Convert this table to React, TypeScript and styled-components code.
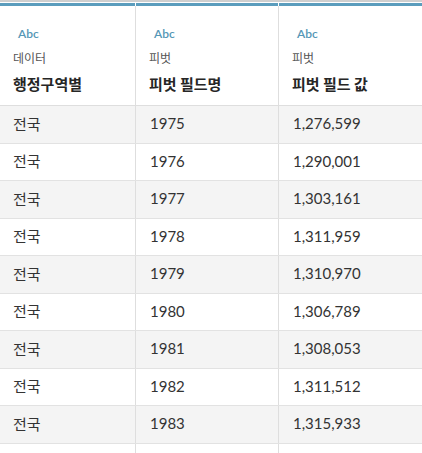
import React from "react";
import styled, { createGlobalStyle } from "styled-components";

const GlobalStyle = createGlobalStyle`
  html, body { margin: 0; padding: 0; background: #ffffff; }
  body { font-family: Lato, "Noto Sans CJK KR", sans-serif; }
`;

const COLS = "136px 143px 1fr";

const Table = styled.div`
  width: 422px;
  height: 453px;
  overflow: hidden;
  border-top: 2px solid #cfcfcf;
  box-sizing: border-box;
  background: #fff;
`;

const HeaderRow = styled.div`
  display: grid;
  grid-template-columns: ${COLS};
  padding-top: 1px;
  border-bottom: 1px solid #dedede;
`;

const HeaderCell = styled.div`
  display: flex;
  flex-direction: column;
`;

const Bar = styled.div<{ $last?: boolean }>`
  height: 3px;
  background: #5b9dbd;
  margin-right: ${(p) => (p.$last ? "0" : "1px")};
`;

const HeaderBody = styled.div<{ $last?: boolean }>`
  height: 99px;
  box-sizing: border-box;
  padding: 21px 0 0 13px;
  border-right: ${(p) => (p.$last ? "none" : "1px solid #dedede")};
  display: flex;
  flex-direction: column;
`;

const TypeTag = styled.div`
  font-family: Lato, sans-serif;
  font-size: 12px;
  font-weight: 600;
  color: #5597b6;
  padding-left: 5px;
  line-height: 14px;
`;

const SubLabel = styled.div`
  font-family: "Noto Sans CJK KR", sans-serif;
  font-size: 12px;
  color: #555;
  line-height: 16px;
  margin-top: 9px;
`;

const FieldName = styled.div`
  font-family: "Noto Sans CJK KR", sans-serif;
  font-size: 15px;
  font-weight: 700;
  color: #262626;
  line-height: 20px;
  margin-top: 8px;
`;

const Row = styled.div<{ $striped: boolean }>`
  display: grid;
  grid-template-columns: ${COLS};
  height: 37.5px;
  box-sizing: border-box;
  border-bottom: 1px solid #e2e2e2;
  background: ${(p) => (p.$striped ? "#f4f4f4" : "#ffffff")};
`;

const Cell = styled.div<{ $last?: boolean; $korean?: boolean }>`
  display: flex;
  align-items: center;
  padding-left: ${(p) => (p.$korean ? "13px" : "14px")};
  padding-bottom: 2px;
  border-right: ${(p) => (p.$last ? "none" : "1px solid #dedede")};
  font-family: ${(p) =>
    p.$korean ? '"Noto Sans CJK KR", sans-serif' : "Lato, sans-serif"};
  font-size: 15px;
  color: #333;
`;

const Filler = styled.div`
  display: grid;
  grid-template-columns: ${COLS};
  height: 40px;
`;

const FillerCell = styled.div<{ $last?: boolean }>`
  border-right: ${(p) => (p.$last ? "none" : "1px solid #dedede")};
`;

const headers = [
  { type: "Abc", sub: "데이터", name: "행정구역별" },
  { type: "Abc", sub: "피벗", name: "피벗 필드명" },
  { type: "Abc", sub: "피벗", name: "피벗 필드 값" },
];

const rows: [string, string, string][] = [
  ["전국", "1975", "1,276,599"],
  ["전국", "1976", "1,290,001"],
  ["전국", "1977", "1,303,161"],
  ["전국", "1978", "1,311,959"],
  ["전국", "1979", "1,310,970"],
  ["전국", "1980", "1,306,789"],
  ["전국", "1981", "1,308,053"],
  ["전국", "1982", "1,311,512"],
  ["전국", "1983", "1,315,933"],
];

export default function App() {
  return (
    <>
      <GlobalStyle />
      <Table>
        <HeaderRow>
          {headers.map((h, i) => (
            <HeaderCell key={i}>
              <Bar $last={i === 2} />
              <HeaderBody $last={i === 2}>
                <TypeTag>{h.type}</TypeTag>
                <SubLabel>{h.sub}</SubLabel>
                <FieldName>{h.name}</FieldName>
              </HeaderBody>
            </HeaderCell>
          ))}
        </HeaderRow>
        {rows.map((r, i) => (
          <Row key={i} $striped={i % 2 === 0}>
            <Cell $korean>{r[0]}</Cell>
            <Cell>{r[1]}</Cell>
            <Cell $last>{r[2]}</Cell>
          </Row>
        ))}
        <Filler>
          <FillerCell />
          <FillerCell />
          <FillerCell $last />
        </Filler>
      </Table>
    </>
  );
}
